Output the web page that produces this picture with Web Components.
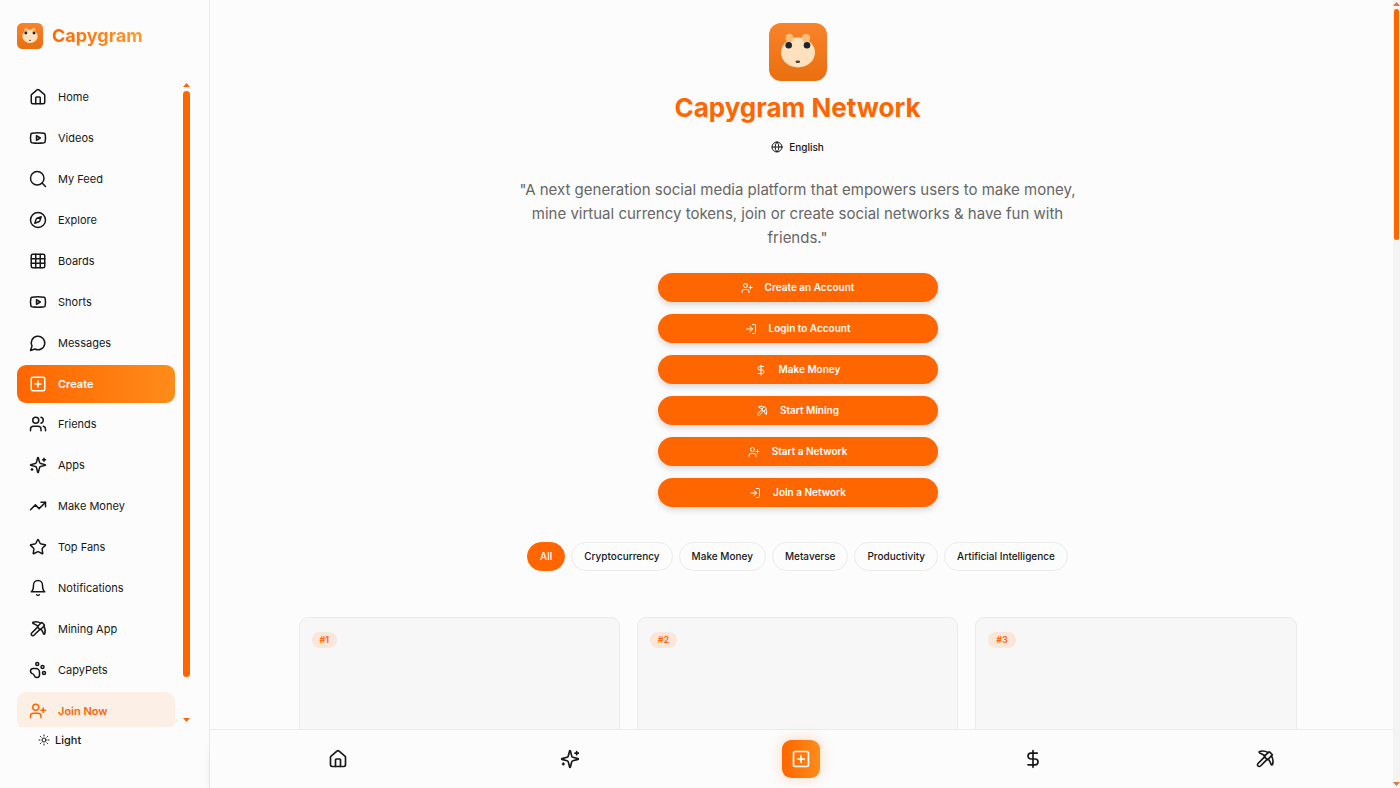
<!DOCTYPE html>
<html lang="en">
<head>
<meta charset="utf-8">
<meta name="viewport" content="width=device-width, initial-scale=1">
<title>Capygram Network</title>
<style>
  html, body { margin: 0; height: 100%; }
  body {
    --brand: #ff6600;
    --brand-light: #ff8c1a;
    --ink: #171717;
    --line: #ebebeb;
    --page: #fcfcfc;
    background: var(--page);
    color: var(--ink);
    font-family: Inter, "Liberation Sans", sans-serif;
    overflow: hidden;
  }
</style>
</head>
<body>
<capy-app></capy-app>

<script>
const ICONS = {
  home: '<path d="M15 21v-8a1 1 0 0 0-1-1h-4a1 1 0 0 0-1 1v8"/><path d="M3 10a2 2 0 0 1 .709-1.528l7-5.999a2 2 0 0 1 2.582 0l7 5.999A2 2 0 0 1 21 10v9a2 2 0 0 1-2 2H5a2 2 0 0 1-2-2z"/>',
  video: '<path d="M2.5 17a24.12 24.12 0 0 1 0-10 2 2 0 0 1 1.4-1.4 49.56 49.56 0 0 1 16.2 0A2 2 0 0 1 21.5 7a24.12 24.12 0 0 1 0 10 2 2 0 0 1-1.4 1.4 49.55 49.55 0 0 1-16.2 0A2 2 0 0 1 2.5 17"/><path d="m10 15 5-3-5-3z"/>',
  search: '<circle cx="11" cy="11" r="9"/><path d="m22 22-4.6-4.6"/>',
  compass: '<path d="m16.24 7.76-1.804 5.411a2 2 0 0 1-1.265 1.265L7.76 16.24l1.804-5.411a2 2 0 0 1 1.265-1.265z"/><circle cx="12" cy="12" r="10"/>',
  grid: '<rect width="18" height="18" x="3" y="3" rx="2"/><path d="M3 9h18M3 15h18M9 3v18M15 3v18"/>',
  message: '<path d="M7.9 20A9 9 0 1 0 4 16.1L2 22Z"/>',
  plus: '<rect width="18" height="18" x="3" y="3" rx="2"/><path d="M8 12h8M12 8v8"/>',
  users: '<path d="M16 21v-2a4 4 0 0 0-4-4H6a4 4 0 0 0-4 4v2"/><circle cx="9" cy="7" r="4"/><path d="M22 21v-2a4 4 0 0 0-3-3.87M16 3.13a4 4 0 0 1 0 7.75"/>',
  sparkles: '<path d="M9.937 15.5A2 2 0 0 0 8.5 14.063l-6.135-1.582a.5.5 0 0 1 0-.962L8.5 9.936A2 2 0 0 0 9.937 8.5l1.582-6.135a.5.5 0 0 1 .963 0L14.063 8.5A2 2 0 0 0 15.5 9.937l6.135 1.581a.5.5 0 0 1 0 .964L15.5 14.063a2 2 0 0 0-1.437 1.437l-1.582 6.135a.5.5 0 0 1-.963 0z"/><path d="M20 3v4M22 5h-4M4 17v2M5 18H3"/>',
  trending: '<path d="m22 7-8.5 8.5-5-5L2 17"/><path d="M16 7h6v6"/>',
  star: '<path d="M11.525 2.295a.53.53 0 0 1 .95 0l2.31 4.679a2.123 2.123 0 0 0 1.595 1.16l5.166.756a.53.53 0 0 1 .294.904l-3.736 3.638a2.123 2.123 0 0 0-.611 1.878l.882 5.14a.53.53 0 0 1-.771.56l-4.618-2.428a2.122 2.122 0 0 0-1.973 0L6.396 21.01a.53.53 0 0 1-.77-.56l.881-5.139a2.122 2.122 0 0 0-.611-1.879L2.16 9.795a.53.53 0 0 1 .294-.906l5.165-.755a2.122 2.122 0 0 0 1.597-1.16z"/>',
  bell: '<path d="M6 8a6 6 0 0 1 12 0c0 7 3 9 3 9H3s3-2 3-9"/><path d="M10.3 21a1.94 1.94 0 0 0 3.4 0"/>',
  pickaxe: '<path d="M14.531 12.469 6.619 20.38a1 1 0 1 1-3-3l7.912-7.912"/><path d="M15.686 4.314A12.5 12.5 0 0 0 5.461 2.958 1 1 0 0 0 5.58 4.71a22 22 0 0 1 6.318 3.393"/><path d="M17.7 3.7a1 1 0 0 0-1.4 0l-4.6 4.6a1 1 0 0 0 0 1.4l2.6 2.6a1 1 0 0 0 1.4 0l4.6-4.6a1 1 0 0 0 0-1.4z"/><path d="M19.686 8.314a12.501 12.501 0 0 1 1.356 10.225 1 1 0 0 1-1.751-.119 22 22 0 0 0-3.393-6.319"/>',
  paw: '<circle cx="11" cy="4" r="2"/><circle cx="18" cy="8" r="2"/><circle cx="20" cy="16" r="2"/><path d="M9 10a5 5 0 0 1 5 5v3.5a3.5 3.5 0 0 1-6.84 1.045Q6.52 17.48 4.46 16.84A3.5 3.5 0 0 1 5.5 10Z"/>',
  userplus: '<path d="M16 21v-2a4 4 0 0 0-4-4H6a4 4 0 0 0-4 4v2"/><circle cx="9" cy="7" r="4"/><path d="M19 8v6M22 11h-6"/>',
  login: '<path d="M15 3h4a2 2 0 0 1 2 2v14a2 2 0 0 1-2 2h-4"/><path d="m10 17 5-5-5-5M15 12H3"/>',
  dollar: '<path d="M12 2v20M17 5H9.5a3.5 3.5 0 0 0 0 7h5a3.5 3.5 0 0 1 0 7H6"/>',
  sun: '<circle cx="12" cy="12" r="4"/><path d="M12 2v2M12 20v2M4.93 4.93l1.41 1.41M17.66 17.66l1.41 1.41M2 12h2M20 12h2M6.34 17.66l-1.41 1.41M19.07 4.93l-1.41 1.41"/>',
  globe: '<circle cx="12" cy="12" r="10"/><path d="M12 2a14.5 14.5 0 0 0 0 20 14.5 14.5 0 0 0 0-20M2 12h20"/>'
};

class CapyIcon extends HTMLElement {
  constructor() {
    super();
    this.attachShadow({ mode: 'open' });
  }

  connectedCallback() {
    this.shadowRoot.innerHTML = `
      <style>
        :host { display: block; flex: none; width: var(--icon-size, 18px); height: var(--icon-size, 18px); }
        svg { display: block; width: 100%; height: 100%; }
      </style>
      <svg viewBox="0 0 24 24" fill="none" stroke="currentColor" stroke-width="2" stroke-linecap="round" stroke-linejoin="round" aria-hidden="true">${ICONS[this.getAttribute('name')]}</svg>
    `;
  }
}
customElements.define('capy-icon', CapyIcon);

class CapyLogo extends HTMLElement {
  constructor() {
    super();
    this.attachShadow({ mode: 'open' });
    this.shadowRoot.innerHTML = `
      <style>
        :host { display: block; flex: none; width: 26px; height: 26px; }
        svg { display: block; width: 100%; height: 100%; }
      </style>
      <svg viewBox="0 0 58 58" role="img" aria-label="Capygram logo">
        <defs>
          <linearGradient id="fur" x1="0" y1="0" x2="0" y2="1">
            <stop offset="0" stop-color="#f9832a"/>
            <stop offset="1" stop-color="#e96f0e"/>
          </linearGradient>
        </defs>
        <rect width="58" height="58" rx="12" fill="url(#fur)"/>
        <ellipse cx="29" cy="29.5" rx="17" ry="15" fill="#ffe2bd"/>
        <circle cx="20.5" cy="15" r="4.2" fill="#ffbd7c"/>
        <circle cx="37" cy="15" r="4.2" fill="#ffbd7c"/>
        <circle cx="19.7" cy="22.3" r="3.3" fill="#1b2534"/>
        <circle cx="38" cy="22.3" r="3.3" fill="#1b2534"/>
        <ellipse cx="28.8" cy="38.7" rx="2.4" ry="1.3" fill="#45403d"/>
      </svg>
    `;
  }
}
customElements.define('capy-logo', CapyLogo);

// Painted scrollbar: arrow, thumb, arrow
class CapyScrollbar extends HTMLElement {
  constructor() {
    super();
    this.attachShadow({ mode: 'open' });
    this.shadowRoot.innerHTML = `
      <style>
        :host { display: flex; flex-direction: column; align-items: center; width: 7px; }
        .arrow { flex: none; width: 7px; height: 4px; background: var(--arrow, var(--brand)); clip-path: polygon(50% 0, 100% 100%, 0 100%); }
        .arrow.down { clip-path: polygon(0 0, 100% 0, 50% 100%); }
        .track { flex: 1; width: var(--thumb-width, 7px); margin: var(--track-gap, 4px) 0; }
        .thumb { height: var(--thumb-height, 50%); background: var(--brand); border-radius: 4px; }
      </style>
      <div class="arrow"></div>
      <div class="track"><div class="thumb"></div></div>
      <div class="arrow down"></div>
    `;
  }
}
customElements.define('capy-scrollbar', CapyScrollbar);

class NavItem extends HTMLElement {
  constructor() {
    super();
    this.attachShadow({ mode: 'open' });
  }

  connectedCallback() {
    this.shadowRoot.innerHTML = `
      <style>
        :host { display: flex; flex: 1; }
        a {
          flex: 1;
          display: flex;
          align-items: center;
          gap: 11px;
          padding: 0 12px;
          border-radius: 9px;
          color: inherit;
          font-size: 11px;
          line-height: 18px;
          text-decoration: none;
        }
        :host([kind="create"]) a {
          background: linear-gradient(90deg, var(--brand), var(--brand-light));
          color: #fff;
          font-weight: 600;
        }
        :host([kind="join"]) a {
          background: #fcefe5;
          color: var(--brand);
          font-weight: 600;
        }
      </style>
      <a href="#"><capy-icon name="${this.getAttribute('icon')}"></capy-icon><slot></slot></a>
    `;
  }
}
customElements.define('nav-item', NavItem);

class SideBar extends HTMLElement {
  constructor() {
    super();
    this.attachShadow({ mode: 'open' });
    this.shadowRoot.innerHTML = `
      <style>
        :host {
          display: flex;
          flex-direction: column;
          flex: none;
          box-sizing: border-box;
          width: 210px;
          padding: 23px 19px 40px 17px;
          border-right: 1px solid var(--line);
        }
        .brand {
          display: flex;
          align-items: center;
          gap: 9px;
          margin-bottom: 29px;
          color: inherit;
          text-decoration: none;
        }
        .brand span {
          font-size: 18px;
          line-height: 26px;
          font-weight: 700;
          background: linear-gradient(90deg, var(--brand), #ff9a2e);
          -webkit-background-clip: text;
          background-clip: text;
          color: transparent;
        }
        .scroller { flex: 1; min-height: 0; display: flex; gap: 8px; overflow: hidden; }
        nav {
          flex: 1;
          height: calc(100% + 3px);
          display: flex;
          flex-direction: column;
          gap: 3px;
        }
        capy-scrollbar { padding: 5px 0; --thumb-height: 94%; }
        .theme {
          display: flex;
          align-items: center;
          align-self: flex-start;
          gap: 5px;
          margin: 5px 0 0 21px;
          padding: 0;
          border: 0;
          background: none;
          color: inherit;
          font: 500 11px/16px Inter, sans-serif;
          --icon-size: 12px;
        }
      </style>
      <a class="brand" href="#"><capy-logo></capy-logo><span>Capygram</span></a>
      <div class="scroller">
        <nav>
          <nav-item icon="home">Home</nav-item>
          <nav-item icon="video">Videos</nav-item>
          <nav-item icon="search">My Feed</nav-item>
          <nav-item icon="compass">Explore</nav-item>
          <nav-item icon="grid">Boards</nav-item>
          <nav-item icon="video">Shorts</nav-item>
          <nav-item icon="message">Messages</nav-item>
          <nav-item icon="plus" kind="create">Create</nav-item>
          <nav-item icon="users">Friends</nav-item>
          <nav-item icon="sparkles">Apps</nav-item>
          <nav-item icon="trending">Make Money</nav-item>
          <nav-item icon="star">Top Fans</nav-item>
          <nav-item icon="bell">Notifications</nav-item>
          <nav-item icon="pickaxe">Mining App</nav-item>
          <nav-item icon="paw">CapyPets</nav-item>
          <nav-item icon="userplus" kind="join">Join Now</nav-item>
        </nav>
        <capy-scrollbar></capy-scrollbar>
      </div>
      <button class="theme" type="button"><capy-icon name="sun"></capy-icon>Light</button>
    `;
  }
}
customElements.define('side-bar', SideBar);

class ActionButton extends HTMLElement {
  constructor() {
    super();
    this.attachShadow({ mode: 'open' });
  }

  connectedCallback() {
    this.shadowRoot.innerHTML = `
      <style>
        :host { display: block; }
        button {
          width: 100%;
          height: 29px;
          display: flex;
          align-items: center;
          justify-content: center;
          gap: 12px;
          padding: 0 12px;
          border: 0;
          border-radius: 15px;
          background: var(--brand);
          color: #fff;
          font: 600 10px/15px Inter, sans-serif;
          box-shadow: 0 3px 6px rgba(0, 0, 0, 0.15);
          --icon-size: 12px;
        }
      </style>
      <button type="button"><capy-icon name="${this.getAttribute('icon')}"></capy-icon><slot></slot></button>
    `;
  }
}
customElements.define('action-button', ActionButton);

class FilterPill extends HTMLElement {
  constructor() {
    super();
    this.attachShadow({ mode: 'open' });
    this.shadowRoot.innerHTML = `
      <style>
        :host { display: block; }
        button {
          height: 29px;
          padding: 0 12px;
          border: 1px solid var(--line);
          border-radius: 15px;
          background: var(--page);
          color: inherit;
          font: 500 10px/15px Inter, sans-serif;
          white-space: nowrap;
        }
        :host([active]) button { background: var(--brand); border-color: var(--brand); color: #fff; }
      </style>
      <button type="button"><slot></slot></button>
    `;
  }
}
customElements.define('filter-pill', FilterPill);

class RankCard extends HTMLElement {
  constructor() {
    super();
    this.attachShadow({ mode: 'open' });
    this.shadowRoot.innerHTML = `
      <style>
        :host {
          display: block;
          min-height: 170px;
          padding: 14px 12px;
          border: 1px solid var(--line);
          border-radius: 9px;
          background: #f7f7f7;
        }
        span {
          display: block;
          width: fit-content;
          padding: 0 8px;
          border-radius: 8px;
          background: #fbe6da;
          color: var(--brand);
          font-size: 9px;
          line-height: 16px;
          font-weight: 600;
        }
      </style>
      <span><slot></slot></span>
    `;
  }
}
customElements.define('rank-card', RankCard);

class BottomBar extends HTMLElement {
  constructor() {
    super();
    this.attachShadow({ mode: 'open' });
    this.shadowRoot.innerHTML = `
      <style>
        :host {
          display: block;
          flex: none;
          position: relative;
          border-top: 1px solid var(--line);
          background: var(--page);
          box-shadow: 0 12px 14px -6px rgba(0, 0, 0, 0.16);
        }
        nav {
          display: grid;
          grid-template-columns: repeat(5, 1fr);
          justify-items: center;
          align-items: center;
          padding: 10px 12px;
          --icon-size: 20px;
        }
        a { display: block; padding: 9px; color: inherit; }
        .create {
          border-radius: 9px;
          background: linear-gradient(90deg, var(--brand), var(--brand-light));
          box-shadow: 0 0 14px rgba(255, 102, 0, 0.25);
          color: #fff;
        }
      </style>
      <nav>
        <a href="#" aria-label="Home"><capy-icon name="home"></capy-icon></a>
        <a href="#" aria-label="Apps"><capy-icon name="sparkles"></capy-icon></a>
        <a class="create" href="#" aria-label="Create"><capy-icon name="plus"></capy-icon></a>
        <a href="#" aria-label="Make Money"><capy-icon name="dollar"></capy-icon></a>
        <a href="#" aria-label="Mining App"><capy-icon name="pickaxe"></capy-icon></a>
      </nav>
    `;
  }
}
customElements.define('bottom-bar', BottomBar);

class NetworkPage extends HTMLElement {
  constructor() {
    super();
    this.attachShadow({ mode: 'open' });
    this.shadowRoot.innerHTML = `
      <style>
        :host {
          display: flex;
          flex-direction: column;
          align-items: center;
          flex: 1;
          min-height: 0;
          padding: 23px 24px 0 16px;
          overflow: hidden;
        }
        :host > * { flex: none; }
        capy-logo { width: 58px; height: 58px; }
        h1 { margin: 11px 0 14px; color: var(--brand); font-size: 26px; line-height: 32px; font-weight: 700; }
        .language {
          display: flex;
          align-items: center;
          gap: 6px;
          padding: 0;
          border: 0;
          background: none;
          color: inherit;
          font: 500 10px/18px Inter, sans-serif;
          --icon-size: 12px;
        }
        p {
          max-width: 560px;
          margin: 22px 0 23px;
          color: #666;
          font-size: 15px;
          line-height: 24px;
          text-align: center;
        }
        .actions { display: flex; flex-direction: column; gap: 12px; width: 280px; }
        .filters { display: flex; flex-wrap: wrap; justify-content: center; gap: 6px; margin: 35px 0 46px; }
        .cards {
          display: grid;
          grid-template-columns: repeat(3, 1fr);
          gap: 17px;
          width: 100%;
          max-width: 998px;
        }
      </style>
      <capy-logo></capy-logo>
      <h1>Capygram Network</h1>
      <button class="language" type="button"><capy-icon name="globe"></capy-icon>English</button>
      <p>"A next generation social media platform that empowers users to make money, mine virtual currency tokens, join or create social networks &amp; have fun with friends."</p>
      <div class="actions">
        <action-button icon="userplus">Create an Account</action-button>
        <action-button icon="login">Login to Account</action-button>
        <action-button icon="dollar">Make Money</action-button>
        <action-button icon="pickaxe">Start Mining</action-button>
        <action-button icon="userplus">Start a Network</action-button>
        <action-button icon="login">Join a Network</action-button>
      </div>
      <div class="filters">
        <filter-pill active>All</filter-pill>
        <filter-pill>Cryptocurrency</filter-pill>
        <filter-pill>Make Money</filter-pill>
        <filter-pill>Metaverse</filter-pill>
        <filter-pill>Productivity</filter-pill>
        <filter-pill>Artificial Intelligence</filter-pill>
      </div>
      <div class="cards">
        <rank-card>#1</rank-card>
        <rank-card>#2</rank-card>
        <rank-card>#3</rank-card>
      </div>
    `;
  }
}
customElements.define('network-page', NetworkPage);

class CapyApp extends HTMLElement {
  constructor() {
    super();
    this.attachShadow({ mode: 'open' });
    this.shadowRoot.innerHTML = `
      <style>
        :host { display: flex; height: 100vh; overflow: hidden; }
        main { flex: 1; min-width: 0; display: flex; flex-direction: column; }
        capy-scrollbar {
          position: relative;
          box-sizing: border-box;
          padding: 2px 0;
          background: #f3f3f3;
          --arrow: #d9783f;
          --thumb-width: 5px;
          --track-gap: 3px;
          --thumb-height: 30%;
        }
      </style>
      <side-bar></side-bar>
      <main>
        <network-page></network-page>
        <bottom-bar></bottom-bar>
      </main>
      <capy-scrollbar></capy-scrollbar>
    `;
  }
}
customElements.define('capy-app', CapyApp);
</script>
</body>
</html>
